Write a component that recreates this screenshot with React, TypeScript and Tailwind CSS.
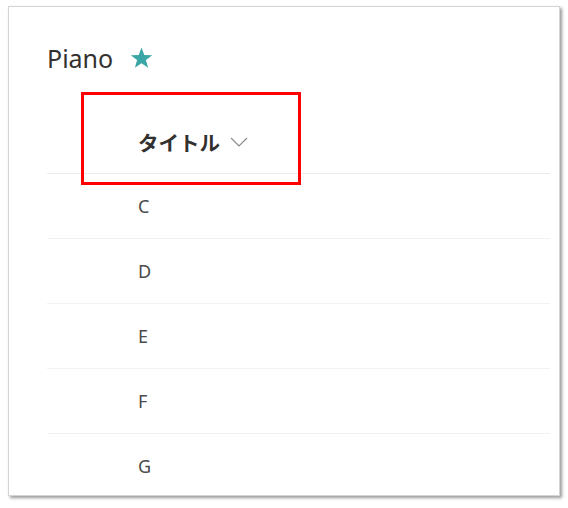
import React from "react";

const rows = ["C", "D", "E", "F", "G"];

export default function App() {
  return (
    <div
      className="relative w-[568px] h-[508px] bg-white overflow-hidden"
      style={{ fontFamily: '"Noto Sans", "Noto Sans CJK JP", sans-serif' }}
    >
      <div className="absolute left-[8px] top-[6px] w-[552px] h-[490px] bg-white border border-[#d4d4d4] shadow-[2px_2px_3px_rgba(0,0,0,0.4)] overflow-hidden">
        <div className="pl-[38px] pr-[9px] pt-[36px]">
          <div className="flex items-center h-[30px]">
            <span className="text-[25px] leading-[30px] text-[#323130]">Piano</span>
            <svg className="ml-[17px]" width="23" height="22" viewBox="0 0 24 23">
              <polygon
                points="12,0.5 14.9,8.3 23.2,8.6 16.6,13.7 18.9,21.7 12,17 5.1,21.7 7.4,13.7 0.8,8.6 9.1,8.3"
                fill="#3aa6a6"
              />
            </svg>
          </div>
          <div className="flex items-center pl-[91px] pt-[58px] pb-[20px] border-b border-[#edebe9]">
            <span
              className="text-[20.5px] leading-[22px] font-bold text-[#323130]"
              style={{ fontFamily: '"Noto Sans CJK JP", sans-serif' }}
            >
              タイトル
            </span>
            <svg className="ml-[10px]" width="18" height="10" viewBox="0 0 18 10">
              <polyline points="1,1 9,9 17,1" fill="none" stroke="#8a8886" strokeWidth="1.1" />
            </svg>
          </div>
          {rows.map((r) => (
            <div
              key={r}
              className="flex items-center h-[65px] pl-[91px] border-b border-[#f3f2f1] text-[18px] text-[#4a4a4a]"
            >
              {r}
            </div>
          ))}
        </div>
      </div>
      <div className="absolute left-[81px] top-[92px] w-[220px] h-[93px] border-[3px] border-[#ff0000]" />
    </div>
  );
}
